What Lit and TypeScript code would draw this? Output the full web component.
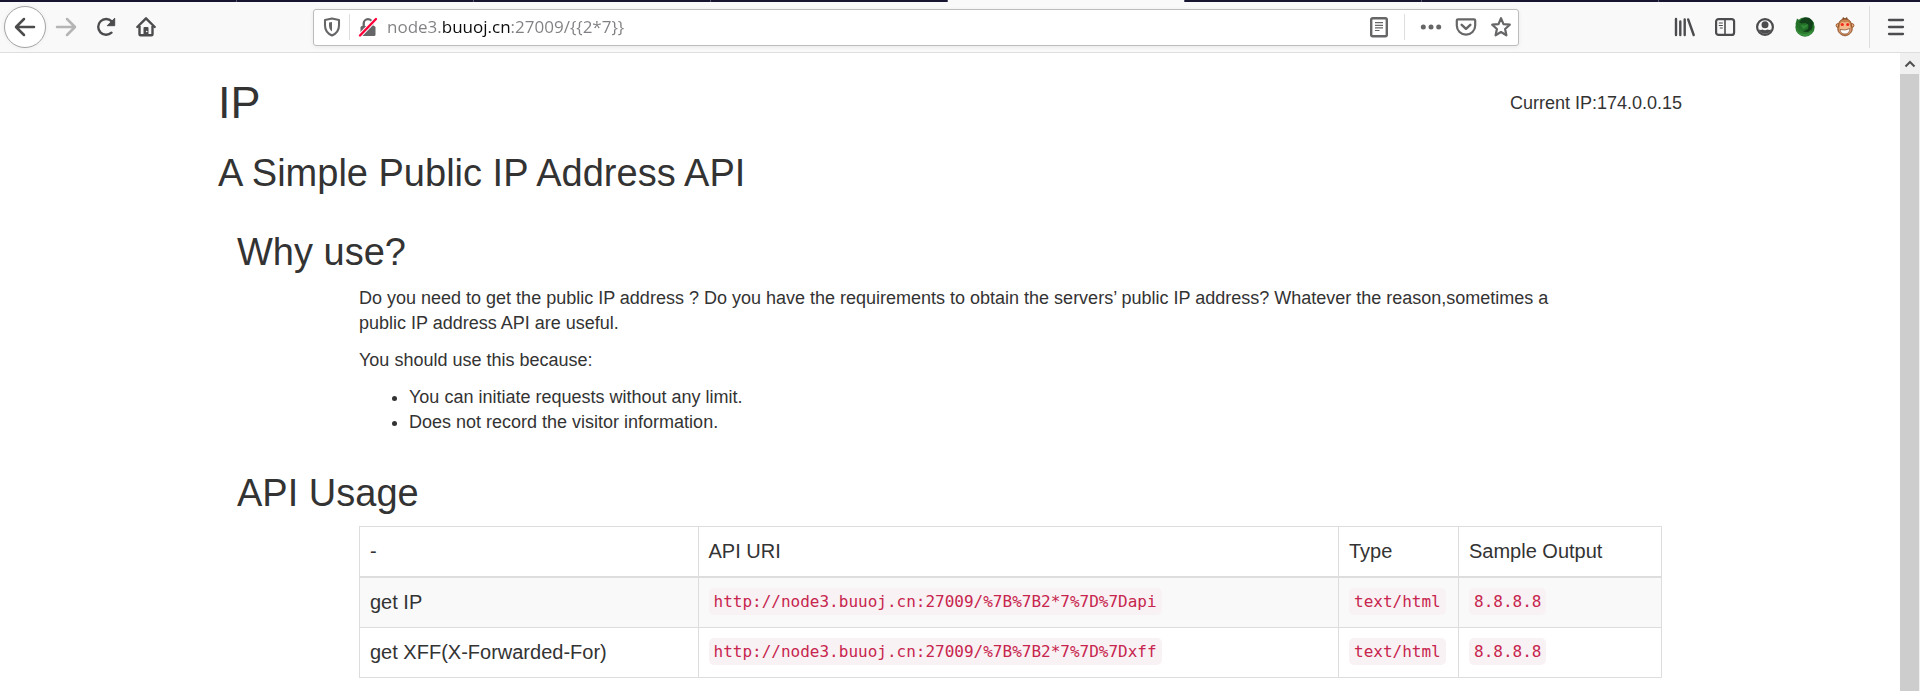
import { LitElement, html, css, svg } from "lit";
import { customElement } from "lit/decorators.js";

const back = svg`<path d="M21 12H3.5M11 4 3 12l8 8" fill="none" stroke="currentColor" stroke-width="2.500" stroke-linecap="round" stroke-linejoin="round"/>`;
const forward = svg`<path d="M3 12h17.500M13 4l8 8-8 8" fill="none" stroke="currentColor" stroke-width="2.500" stroke-linecap="round" stroke-linejoin="round"/>`;
const reload = svg`<path d="M17.500 17.700A7.900 7.900 0 1 1 17.700 6.300" fill="none" stroke="currentColor" stroke-width="2.400" stroke-linecap="round"/><path d="M20.700 3.200v7.500h-7.500z" fill="currentColor" stroke="currentColor" stroke-width="1" stroke-linejoin="round"/>`;
const home = svg`<path d="M3.300 12 12 3.300 20.700 12" fill="none" stroke="currentColor" stroke-width="2.400" stroke-linecap="round" stroke-linejoin="round"/><path d="M5.500 11v8.300q0 1 1 1h11q1 0 1-1V11" fill="none" stroke="currentColor" stroke-width="2.400"/><path d="M9.500 20.500v-7.500q0-1 1-1h3q1 0 1 1v7.500z" fill="currentColor"/><circle cx="12.700" cy="16.500" r=".8" fill="#f9f9fa"/>`;
const shield = svg`<path d="M12 3.500 19 5v5.500c0 4.500-2.500 8-7 10-4.500-2-7-5.500-7-10V5z" fill="none" stroke="currentColor" stroke-width="2.100" stroke-linejoin="round"/><path d="M12 7v9.500c-2-1.500-3-3.500-3-6V7.600z" fill="currentColor"/>`;
const lock = svg`<rect x="4.500" y="11" width="15" height="10" rx="1.500" fill="currentColor"/><path d="M7.700 12V8.500a4.300 4.300 0 0 1 8.600 0V12" fill="none" stroke="currentColor" stroke-width="2.300"/><path d="M4 20.500 20 4" stroke="#fff" stroke-width="4.200"/><path d="M4 20.500 20 4" stroke="#ff0039" stroke-width="2.400" stroke-linecap="round"/>`;
const reader = svg`<rect x="4.200" y="3.200" width="15.600" height="18" rx="1.500" fill="none" stroke="currentColor" stroke-width="2.400"/><path d="M8 7.700h8M8 10.300h8M8 12.900h8M8 15.500h4.500" stroke="currentColor" stroke-width="1.200"/>`;
const dots = svg`<g fill="currentColor"><circle cx="4.300" cy="12" r="2.500"/><circle cx="12" cy="12" r="2.500"/><circle cx="19.700" cy="12" r="2.500"/></g>`;
const pocket = svg`<path d="M4 4.300h16q1.200 0 1.200 1.200v5a9.200 9.200 0 0 1-18.400 0v-5q0-1.200 1.200-1.200z" fill="none" stroke="currentColor" stroke-width="2.200"/><path d="m7.700 9.800 4.300 4 4.300-4" fill="none" stroke="currentColor" stroke-width="2.500" stroke-linecap="round" stroke-linejoin="round"/>`;
const star = svg`<path d="m12 3.200 2.500 5.900 6.300.6-4.700 4.300 1.300 6.300L12 17l-5.400 3.300L7.900 14 3.200 9.700l6.300-.6z" fill="none" stroke="currentColor" stroke-width="2.200" stroke-linejoin="round"/>`;
const library = svg`<path d="M3 4v16M7.300 6.500V20M11.700 4.500V20M15.200 4.500 20.700 20" fill="none" stroke="currentColor" stroke-width="2.400" stroke-linecap="round"/>`;
const sidebar = svg`<rect x="3.100" y="4.100" width="18" height="15.800" rx="2.500" fill="none" stroke="currentColor" stroke-width="2.200"/><path d="M12 4v16" stroke="currentColor" stroke-width="1.600"/><path d="M5.800 8h4M5.800 10.500h4M6.800 13h3" stroke="currentColor" stroke-width="1.200"/>`;
const account = svg`<circle cx="12" cy="12" r="7.900" fill="none" stroke="currentColor" stroke-width="2.200"/><circle cx="12" cy="9.700" r="3.500" fill="currentColor"/><path d="M5.500 14.300q2 1.300 4 .3 2.500 1.500 5 0 2 1 4-.3a7 7 0 0 1-13 0z" fill="currentColor"/>`;
const fox = svg`<circle cx="12" cy="12" r="9.700" fill="#2a7a2e"/><path d="M2.500 9 4 3.500l3 2.300A9.500 9.500 0 0 1 21 8l-3 7-7 2-6-4z" fill="#237029"/><path d="M9 4c5-3 10-1 11 4l-1 6-4 3-5-.5 5-2.500.5-4-3-2-4 .5L6 7z" fill="#12401a"/><path d="m8 10 4 .5 3-1.500-1 3-4 2z" fill="#338a38"/><path d="M3 14q3 5 9 5 5 0 8-4-2 6-8 6-7 0-9-7z" fill="#3c9440"/>`;
const monkey = svg`<path d="m9 5 1-3 2 1.500L14 2l1 3z" fill="#7a4520"/><circle cx="5" cy="10.500" r="1.900" fill="#e6ad80" stroke="#a05c30"/><circle cx="19" cy="10.500" r="1.900" fill="#e6ad80" stroke="#a05c30"/><path d="M12 4c4.500 0 6.500 3 6.500 7 1.500 3 .5 6-1.500 7.500-3 3-7 3-10 0C5 17 4 14 5.500 11c0-4 2-7 6.500-7z" fill="#c98350" stroke="#8a5028" stroke-width=".9"/><path d="M12 7.500q5-2 5 3.500 2 5-1 7-4 2.500-8 0-3-2-1-7Q7 5.500 12 7.500z" fill="#f3b98c"/><circle cx="9.300" cy="9.500" r="1.600" fill="#f32b18"/><circle cx="14.700" cy="9.500" r="1.600" fill="#f32b18"/><path d="M7 14.500q5 1.500 10-1-.500 5.500-5 5.500t-5-4.500z" fill="#fff" stroke="#7c4a30" stroke-width=".7"/>`;
const menu = svg`<path d="M5 5h14M5 12h14M5 19h14" stroke="currentColor" stroke-width="2.300" stroke-linecap="round"/>`;

const icon = (glyph: unknown) => html`<svg viewBox="0 0 24 24" width="24" height="24" aria-hidden="true">${glyph}</svg>`;
const tool = (label: string, glyph: unknown, kind = "") =>
  html`<button class="tool ${kind}" aria-label=${label}>${icon(glyph)}</button>`;

@customElement("browser-toolbar")
class BrowserToolbar extends LitElement {
  static styles = css`
    :host { display: block; background: #f9f9fa; border-bottom: 1px solid #dedede; }
    .tabs { display: flex; height: 2px; gap: 1px; background: #55556f; }
    .tab { flex: 0 0 236px; background: #17152f; }
    .active { background: #f9f9fa; }
    .rest { flex: 1; }
    .bar { display: flex; align-items: center; height: 50px; padding: 0 4px; color: #4c4c4f; }
    button { border: 0; padding: 0; margin: 0; background: none; color: inherit; display: flex; align-items: center; justify-content: center; }
    .tool { width: 40px; height: 40px; flex: none; }
    .back { width: 42px; height: 42px; box-sizing: border-box; border: 1px solid #a4a4a6; border-radius: 50%; background: #fff; box-shadow: 0 0 4px #0001; }
    .off { color: #b5b5b6; }
    .address { flex: 1; display: flex; align-items: center; height: 37px; box-sizing: border-box; margin: 0 146px 0 147px; border: 1px solid #bcbcbe; border-radius: 3px; background: #fff; box-shadow: 0 1px 4px #0001; color: #666668; }
    .address .tool { width: 35px; height: 35px; }
    .rule { width: 1px; height: 26px; flex: none; background: #dedee0; }
    .address .reader { width: 50px; }
    .address .more { margin-left: 8px; }
    .url { flex: 1; min-width: 0; border: 0; outline: 0; padding: 0 0 0 2px; margin: 0; font: 17px/26px "Open Sans", sans-serif; color: transparent; background: linear-gradient(90deg, #808084 57px, #0c0c0d 57px 126px, #808084 126px); -webkit-background-clip: text; background-clip: text; caret-color: #0c0c0d; }
    .edge { height: 42px; margin: 0 6px 0 4px; }
  `;
  render() {
    return html`
      <div class="tabs">
        <div class="tab"></div><div class="tab"></div><div class="tab"></div><div class="tab"></div>
        <div class="tab active"></div><div class="tab"></div><div class="tab"></div><div class="tab rest"></div>
      </div>
      <nav class="bar">
        ${tool("Back", back, "back")} ${tool("Forward", forward, "off")} ${tool("Reload", reload)} ${tool("Home", home)}
        <div class="address">
          ${tool("Tracking protection", shield)}
          <span class="rule"></span>
          ${tool("Connection not secure", lock)}
          <input class="url" aria-label="Address" spellcheck="false" .value=${"node3.buuoj.cn:27009/{{2*7}}"} />
          ${tool("Reader view", reader, "reader")}
          <span class="rule"></span>
          ${tool("Page actions", dots, "more")} ${tool("Save to Pocket", pocket)} ${tool("Bookmark", star)}
        </div>
        ${tool("Library", library)} ${tool("Sidebars", sidebar)} ${tool("Account", account)} ${tool("Extension", fox)} ${tool("Tampermonkey", monkey)}
        <span class="rule edge"></span>
        ${tool("Menu", menu)}
      </nav>`;
  }
}

const rows = [
  { name: "get IP", path: "api" },
  { name: "get XFF(X-Forwarded-For)", path: "xff" },
];

@customElement("ip-page")
class IpPage extends LitElement {
  static styles = css`
    :host { display: block; color: #333; font: 18px/25px "Liberation Sans", Arial, sans-serif; }
    .page { max-width: 1464px; margin: 0 auto; padding-top: 25px; }
    .top { display: flex; justify-content: space-between; align-items: center; }
    h1, h2, p, ul { margin: 0; font-weight: 400; }
    h1 { font-size: 45px; line-height: 50px; }
    h2 { font-size: 38px; line-height: 41px; }
    .lead { margin-top: 25px; }
    section { padding: 38px 20px 0 19px; }
    .body { margin-left: 122px; padding-top: 12px; }
    .text { max-width: 1200px; padding-top: 13px; }
    p { margin-bottom: 12px; }
    ul { padding-left: 50px; }
    table { width: 100%; border-collapse: collapse; table-layout: fixed; font-size: 20px; line-height: 29px; }
    th, td { box-sizing: border-box; border: 1px solid #ddd; padding: 10px; text-align: left; font-weight: 400; }
    th { border-bottom-width: 2px; }
    tbody tr:nth-child(odd) { background: #f9f9f9; }
    .name { width: 26%; }
    .type { width: 120px; }
    .sample { width: 203px; }
    code { display: inline-block; padding: 2px 5px; border-radius: 5px; background: #f9f2f4; color: #c7254e; font: 16px/23px "DejaVu Sans Mono", monospace; vertical-align: top; }
  `;
  render() {
    return html`
      <main class="page">
        <header class="top"><h1>IP</h1><span>Current IP:174.0.0.15</span></header>
        <h2 class="lead">A Simple Public IP Address API</h2>
        <section>
          <h2>Why use?</h2>
          <div class="body text">
            <p>Do you need to get the public IP address ? Do you have the requirements to obtain the servers’ public IP address? Whatever the reason,sometimes a public IP address API are useful.</p>
            <p>You should use this because:</p>
            <ul><li>You can initiate requests without any limit.</li><li>Does not record the visitor information.</li></ul>
          </div>
        </section>
        <section>
          <h2>API Usage</h2>
          <div class="body">
            <table>
              <thead><tr><th class="name">-</th><th>API URI</th><th class="type">Type</th><th class="sample">Sample Output</th></tr></thead>
              <tbody>${rows.map((r) => html`<tr><td>${r.name}</td><td><code>http://node3.buuoj.cn:27009/%7B%7B2*7%7D%7D${r.path}</code></td><td><code>text/html</code></td><td><code>8.8.8.8</code></td></tr>`)}</tbody>
            </table>
          </div>
        </section>
      </main>`;
  }
}

@customElement("app-root")
class AppRoot extends LitElement {
  static styles = css`
    :host { display: flex; flex-direction: column; height: 100vh; overflow: hidden; background: #fff; }
    .view { flex: 1; min-height: 0; display: flex; }
    ip-page { flex: 1; min-width: 0; overflow: hidden; }
    .scroll { width: 20px; background: #f0f0f0; display: flex; flex-direction: column; padding-right: 1px; box-sizing: border-box; }
    .up { height: 21px; border: 0; padding: 0; background: none; color: #505050; display: flex; align-items: center; justify-content: center; }
    .thumb { flex: 1; background: #cdcdcd; }
  `;
  render() {
    return html`
      <browser-toolbar></browser-toolbar>
      <div class="view">
        <ip-page></ip-page>
        <div class="scroll">
          <button class="up" aria-label="Scroll up"><svg width="12" height="8" viewBox="0 0 12 8"><path d="m1.500 6.500 4.500-4.500 4.500 4.500" fill="none" stroke="currentColor" stroke-width="2"/></svg></button>
          <div class="thumb"></div>
        </div>
      </div>`;
  }
}
